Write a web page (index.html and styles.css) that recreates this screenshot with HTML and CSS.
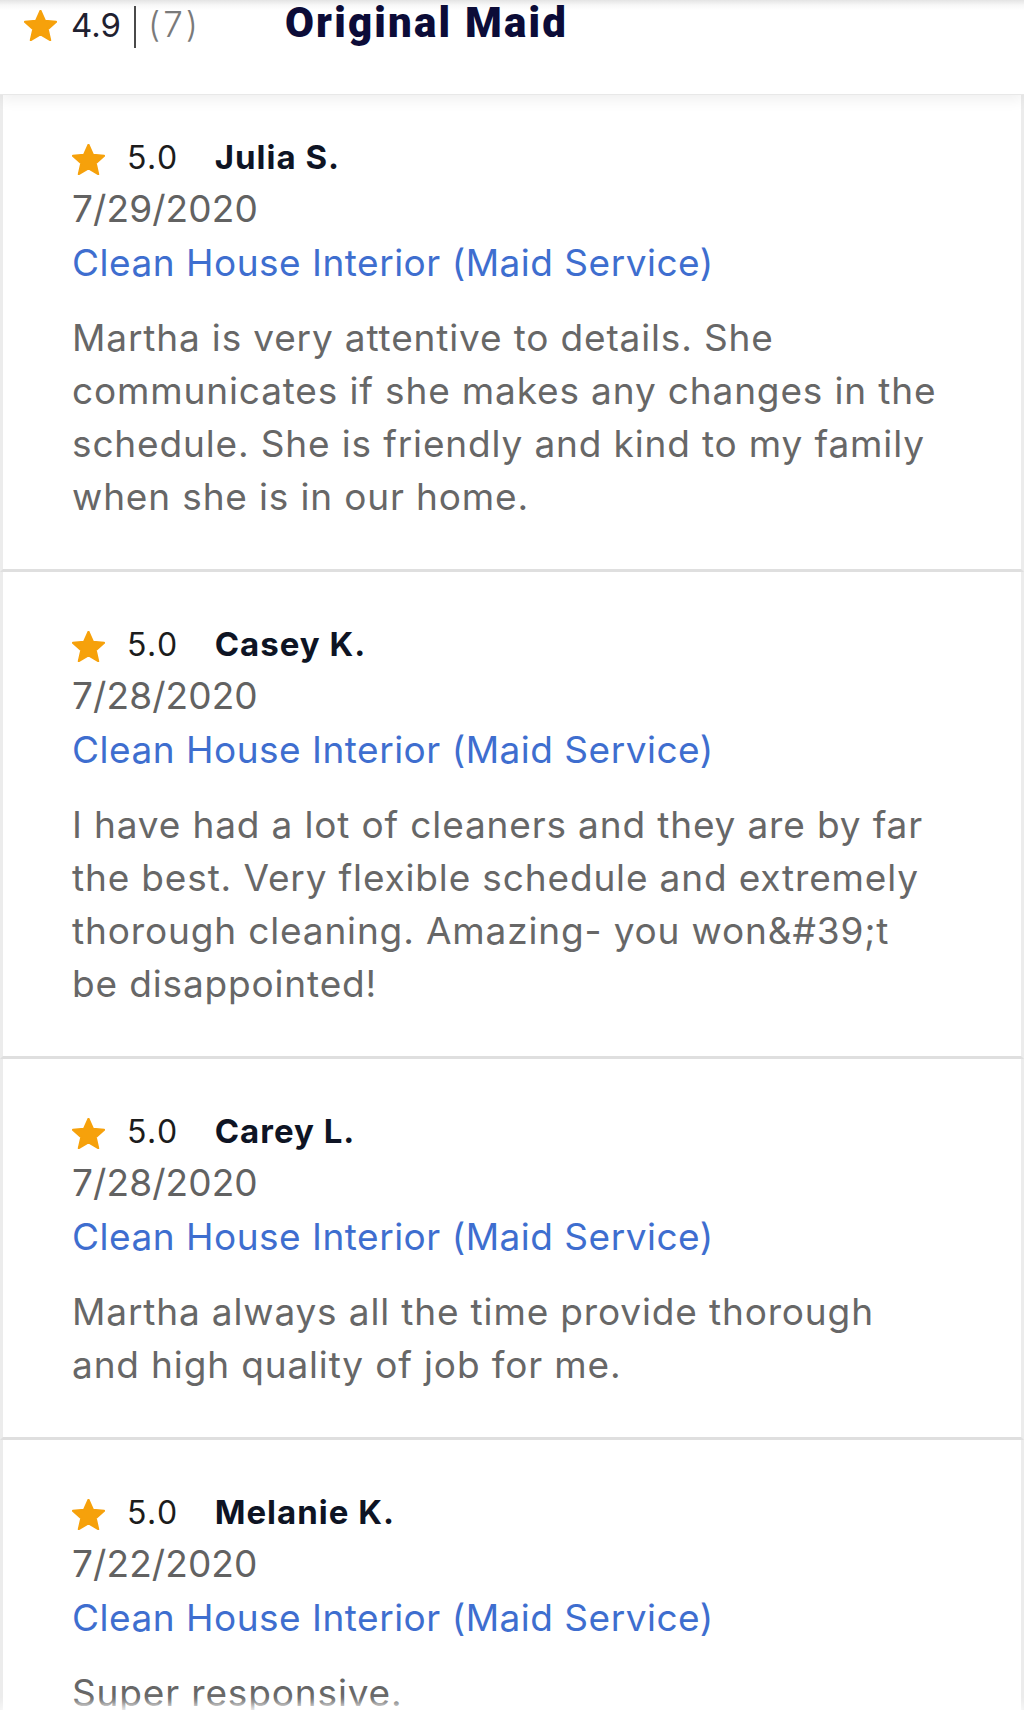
FILE: index.html
```html
<!DOCTYPE html>
<html lang="en">
<head>
<meta charset="utf-8">
<title>Original Maid reviews</title>
<link rel="stylesheet" href="styles.css">
</head>
<body>
<header class="header">
  <div class="rating-line">
    <span class="hstar"><svg viewBox="2.2 2.2 19.6 18.6" width="33" height="31"><path d="M12 2.6l2.75 6.1 6.65.62-5.03 4.45 1.48 6.53L12 16.9l-5.85 3.4 1.48-6.53L2.6 9.32l6.65-.62z" fill="#f6a10b" stroke="#f6a10b" stroke-width="1.2" stroke-linejoin="round"/></svg></span>
    <span class="avg">4.9</span>
    <span class="bar"></span>
    <span class="count">(7)</span>
    <span class="title">Original Maid</span>
  </div>
</header>

<main class="reviews">
  <article class="review">
    <div class="meta">
      <span class="rstar"><svg viewBox="2.2 2.2 19.6 18.6" width="33" height="31"><path d="M12 2.6l2.75 6.1 6.65.62-5.03 4.45 1.48 6.53L12 16.9l-5.85 3.4 1.48-6.53L2.6 9.32l6.65-.62z" fill="#f6a10b" stroke="#f6a10b" stroke-width="1.2" stroke-linejoin="round"/></svg></span>
      <span class="score">5.0</span>
      <span class="name">Julia S.</span>
    </div>
    <div class="date">7/29/2020</div>
    <a class="service" href="#">Clean House Interior (Maid Service)</a>
    <p class="text">Martha is very attentive to details. She<br>communicates if she makes any changes in the<br>schedule. She is friendly and kind to my family<br>when she is in our home.</p>
  </article>

  <article class="review">
    <div class="meta">
      <span class="rstar"><svg viewBox="2.2 2.2 19.6 18.6" width="33" height="31"><path d="M12 2.6l2.75 6.1 6.65.62-5.03 4.45 1.48 6.53L12 16.9l-5.85 3.4 1.48-6.53L2.6 9.32l6.65-.62z" fill="#f6a10b" stroke="#f6a10b" stroke-width="1.2" stroke-linejoin="round"/></svg></span>
      <span class="score">5.0</span>
      <span class="name">Casey K.</span>
    </div>
    <div class="date">7/28/2020</div>
    <a class="service" href="#">Clean House Interior (Maid Service)</a>
    <p class="text">I have had a lot of cleaners and they are by far<br>the best. Very flexible schedule and extremely<br>thorough cleaning. Amazing- you won&amp;#39;t<br>be disappointed!</p>
  </article>

  <article class="review">
    <div class="meta">
      <span class="rstar"><svg viewBox="2.2 2.2 19.6 18.6" width="33" height="31"><path d="M12 2.6l2.75 6.1 6.65.62-5.03 4.45 1.48 6.53L12 16.9l-5.85 3.4 1.48-6.53L2.6 9.32l6.65-.62z" fill="#f6a10b" stroke="#f6a10b" stroke-width="1.2" stroke-linejoin="round"/></svg></span>
      <span class="score">5.0</span>
      <span class="name">Carey L.</span>
    </div>
    <div class="date">7/28/2020</div>
    <a class="service" href="#">Clean House Interior (Maid Service)</a>
    <p class="text">Martha always all the time provide thorough<br>and high quality of job for me.</p>
  </article>

  <article class="review">
    <div class="meta">
      <span class="rstar"><svg viewBox="2.2 2.2 19.6 18.6" width="33" height="31"><path d="M12 2.6l2.75 6.1 6.65.62-5.03 4.45 1.48 6.53L12 16.9l-5.85 3.4 1.48-6.53L2.6 9.32l6.65-.62z" fill="#f6a10b" stroke="#f6a10b" stroke-width="1.2" stroke-linejoin="round"/></svg></span>
      <span class="score">5.0</span>
      <span class="name">Melanie K.</span>
    </div>
    <div class="date">7/22/2020</div>
    <a class="service" href="#">Clean House Interior (Maid Service)</a>
    <p class="text">Super responsive.</p>
  </article>
</main>

<div class="bottom-cover"></div>
</body>
</html>
```

FILE: styles.css
```css
html, body {
  margin: 0;
  padding: 0;
  background: #ffffff;
}

body {
  font-family: Inter, "Noto Sans", sans-serif;
  color: #636363;
  overflow: hidden;
}

.header {
  position: relative;
  z-index: 2;
  height: 95px;
  box-sizing: border-box;
  background: linear-gradient(#e4e4e4 0, #f7f7f7 5px, #ffffff 10px);
  border-bottom: 1px solid #e8e8e8;
  box-shadow: 0 4px 14px rgba(0, 0, 0, 0.07);
}

.rating-line {
  display: flex;
  align-items: baseline;
  padding: 3px 0 0 24px;
}

.hstar svg {
  display: inline-block;
  vertical-align: -4px;
}

.avg {
  margin-left: 14px;
  font-size: 33px;
  line-height: 40px;
  color: #1f2130;
}

.bar {
  align-self: flex-start;
  width: 2px;
  height: 42px;
  margin: 3px 12px 0 13px;
  background: #4a4a4a;
}

.count {
  font-size: 35px;
  line-height: 40px;
  font-weight: 300;
  color: #7a7a7a;
  letter-spacing: 3px;
}

.title {
  margin-left: 84px;
  font-family: Roboto, "Noto Sans", sans-serif;
  font-weight: 900;
  font-size: 42px;
  line-height: 40px;
  letter-spacing: 2.2px;
  color: #0c0c38;
}

.reviews {
  display: flex;
  flex-direction: column;
}

.review {
  padding: 49px 20px 46px 69px;
  border-left: 3px solid #ececec;
  border-right: 3px solid #ececec;
  border-bottom: 3px solid #dfdfdf;
}

.review:first-child {
  padding-top: 39px;
}

.meta {
  display: flex;
  align-items: baseline;
  height: 46px;
  line-height: 46px;
}

.rstar svg {
  display: inline-block;
  vertical-align: -6px;
}

.score {
  margin-left: 22px;
  font-size: 32px;
  color: #1c1c1c;
  letter-spacing: 1.5px;
}

.name {
  margin-left: 36px;
  font-size: 33px;
  font-weight: 700;
  color: #0e1424;
  letter-spacing: 1px;
}

.date {
  margin-top: 2px;
  font-size: 37px;
  line-height: 54px;
  color: #626262;
  letter-spacing: 0.1px;
}

.service {
  display: block;
  font-size: 37px;
  line-height: 54px;
  color: #3e6ecf;
  text-decoration: none;
  letter-spacing: 0.5px;
}

.text {
  margin: 21px 0 0;
  font-size: 37px;
  line-height: 53px;
  color: #676767;
  letter-spacing: 0.85px;
}

.bottom-cover {
  position: fixed;
  left: 0;
  right: 0;
  bottom: 0;
  height: 26px;
  background: #ffffff;
  box-shadow: 0 -6px 10px rgba(255, 255, 255, 0.9);
}
```
